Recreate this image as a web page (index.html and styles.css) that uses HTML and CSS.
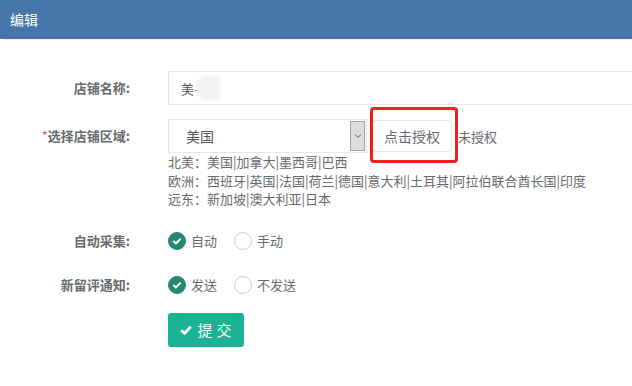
FILE: index.html
```html
<!DOCTYPE html>
<html lang="zh">
<head>
<meta charset="utf-8">
<title>编辑</title>
<link rel="stylesheet" href="styles.css">
</head>
<body>
<div class="header">编辑</div>
<div class="form">
  <div class="row row-name">
    <div class="label">店铺名称:</div>
    <div class="field field-grow">
      <div class="input"><span>美-</span><span class="blur"></span></div>
    </div>
  </div>
  <div class="row row-region">
    <div class="label"><span class="req">*</span>选择店铺区域:</div>
    <div class="field">
      <div class="line">
        <div class="select">
          <span class="select-text">美国</span>
          <span class="arrow"><svg width="8" height="6" viewBox="0 0 8 6"><path d="M1 1.5 L4 4.5 L7 1.5" fill="none" stroke="#555" stroke-width="1"/></svg></span>
        </div>
        <div class="auth-wrap">
          <button class="auth">点击授权</button>
          <span class="mark"></span>
        </div>
        <span class="status">未授权</span>
      </div>
      <div class="help">
        <div>北美：美国|加拿大|墨西哥|巴西</div>
        <div>欧洲：西班牙|英国|法国|荷兰|德国|意大利|土耳其|阿拉伯联合酋长国|印度</div>
        <div>远东：新加坡|澳大利亚|日本</div>
      </div>
    </div>
  </div>
  <div class="row row-radio row-collect">
    <div class="label">自动采集:</div>
    <div class="field radios">
      <span class="opt"><span class="radio on"><svg width="10" height="8" viewBox="0 0 10 8"><path d="M1.3 4 L3.9 6.4 L8.7 1.6" fill="none" stroke="#fff" stroke-width="2"/></svg></span>自动</span>
      <span class="opt"><span class="radio"></span>手动</span>
    </div>
  </div>
  <div class="row row-radio row-notify">
    <div class="label">新留评通知:</div>
    <div class="field radios">
      <span class="opt"><span class="radio on"><svg width="10" height="8" viewBox="0 0 10 8"><path d="M1.3 4 L3.9 6.4 L8.7 1.6" fill="none" stroke="#fff" stroke-width="2"/></svg></span>发送</span>
      <span class="opt"><span class="radio"></span>不发送</span>
    </div>
  </div>
  <div class="row row-submit">
    <div class="label"></div>
    <div class="field">
      <button class="submit"><svg width="12" height="10" viewBox="0 0 12 10"><path d="M1.2 5.2 L4.5 8.3 L10.8 1.6" fill="none" stroke="#fff" stroke-width="2.8"/></svg><span class="submit-text">提</span><span class="submit-text">交</span></button>
    </div>
  </div>
</div>
</body>
</html>
```
FILE: styles.css
```css
html, body {
  margin: 0;
  padding: 0;
  background: #fff;
  overflow: hidden;
}
body {
  font-family: "Noto Sans CJK SC", "Liberation Sans", sans-serif;
  font-size: 13px;
  color: #676a6c;
}
.header {
  height: 39px;
  line-height: 39px;
  background: #4676a7;
  color: #fff;
  font-size: 14px;
  padding-left: 10px;
}
.form {
  border-top: 1px solid #e7eaec;
  margin-left: 5px;
  padding-top: 31px;
}
.row {
  display: flex;
  align-items: flex-start;
  margin-left: -5px;
}
.label {
  width: 130px;
  flex: none;
  margin-right: 38px;
  text-align: right;
  font-weight: bold;
  line-height: 34px;
  color: #676a6c;
}
.req {
  color: #ed5565;
  font-weight: normal;
}
.field {
  flex: none;
}
.field-grow {
  flex: 1;
  min-width: 0;
}
.row-name {
  margin-bottom: 14px;
}
.input {
  height: 32px;
  border: 1px solid #e5e6e7;
  border-right: none;
  display: flex;
  align-items: center;
  padding-left: 12px;
  color: #555;
  font-size: 13px;
}
.blur {
  display: inline-block;
  width: 24px;
  height: 24px;
  background: #f2f2f2;
  border-radius: 10px 2px 2px 10px;
  filter: blur(1px);
  margin-left: -3px;
}
.line {
  display: flex;
  align-items: center;
  height: 34px;
}
.select {
  width: 197px;
  height: 32px;
  border: 1px solid #e5e6e7;
  display: flex;
  align-items: center;
  justify-content: space-between;
  color: #555;
  font-size: 14px;
}
.select-text {
  padding-left: 17px;
}
.arrow {
  width: 15px;
  height: 30px;
  background: #dddddd;
  border: 1px solid #a6a6a6;
  box-sizing: border-box;
  display: flex;
  align-items: center;
  justify-content: center;
  margin-right: 1px;
}
.auth-wrap {
  position: relative;
  margin-left: 5px;
}
.auth {
  display: block;
  width: 80px;
  height: 32px;
  border: 1px solid #e7eaec;
  border-radius: 3px;
  background: #fff;
  color: #676a6c;
  font-family: "Noto Sans CJK SC", "Liberation Sans", sans-serif;
  font-size: 14px;
  padding: 0;
}
.mark {
  position: absolute;
  left: -2px;
  top: -13px;
  width: 82px;
  height: 50px;
  border: 3px solid #f41d1d;
  border-radius: 4px;
}
.status {
  margin-left: 6px;
  font-size: 13px;
  color: #676a6c;
}
.help {
  line-height: 18.5px;
  font-size: 13px;
  color: #676a6c;
}
.row-collect {
  margin-top: 15px;
}
.row-notify {
  margin-top: 10px;
}
.radios {
  display: flex;
  align-items: center;
  height: 34px;
  gap: 17px;
}
.opt {
  display: flex;
  align-items: center;
  gap: 5px;
  font-size: 13px;
  color: #676a6c;
}
.radio {
  width: 18px;
  height: 18px;
  box-sizing: border-box;
  border-radius: 50%;
  border: 1px solid #d3cfc6;
  background: #fff;
  display: flex;
  align-items: center;
  justify-content: center;
}
.radio.on {
  background: #27866f;
  border-color: #27866f;
}
.row-submit {
  margin-top: 11px;
}
.submit {
  width: 76px;
  height: 34px;
  border: none;
  border-radius: 3px;
  background: #1ab394;
  color: #fff;
  font-family: "Noto Sans CJK SC", "Liberation Sans", sans-serif;
  font-size: 15px;
  display: flex;
  align-items: center;
  justify-content: center;
  gap: 4px;
  padding: 0;
}
.submit svg {
  margin-right: 1px;
}
```
